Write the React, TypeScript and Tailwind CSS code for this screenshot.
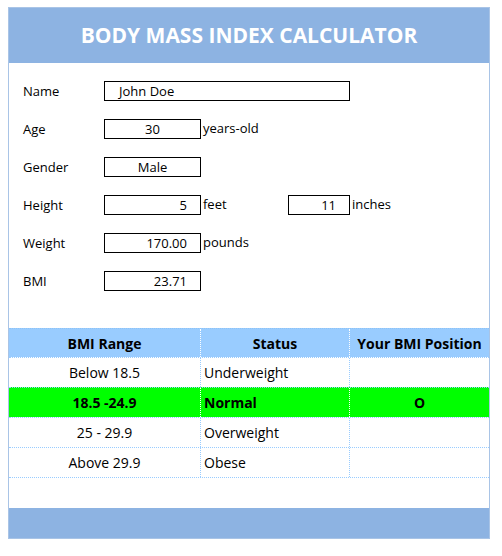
import React from 'react';

const font = { fontFamily: '"Open Sans", "Noto Sans", sans-serif' };

const rows = [
  { range: 'Below 18.5', status: 'Underweight', mark: '' },
  { range: '18.5 -24.9', status: 'Normal', mark: 'O', active: true },
  { range: '25 - 29.9', status: 'Overweight', mark: '' },
  { range: 'Above 29.9', status: 'Obese', mark: '' },
];

const Box: React.FC<{ w: string; align?: 'left' | 'center' | 'right'; children: React.ReactNode }> = ({ w, align = 'right', children }) => (
  <div
    className={`${w} h-[20px] border border-black flex items-center text-[13px] text-black leading-none ${
      align === 'right' ? 'justify-end pr-[13px]' : align === 'center' ? 'justify-center' : 'justify-start pl-[14px]'
    }`}
  >
    {children}
  </div>
);

const Field: React.FC<{ label: string; children: React.ReactNode }> = ({ label, children }) => (
  <div className="flex items-center h-[20px]">
    <div className="w-[81px] text-[13px] text-black pt-[1px]">{label}</div>
    {children}
  </div>
);

export default function App() {
  return (
    <div className="w-[502px] h-[556px] bg-white pt-[7px] pl-[8px]" style={font}>
      <div className="w-[482px] h-[532px] border border-[#a9c4e6] flex flex-col">
        {/* title */}
        <div className="h-[55px] bg-[#8db3e2] flex items-center justify-center shrink-0">
          <h1 className="text-white font-bold text-[21px]">BODY MASS INDEX CALCULATOR</h1>
        </div>

        {/* form */}
        <div className="pl-[14px] pt-[18px] flex flex-col gap-[18px]">
          <Field label="Name">
            <Box w="w-[246px]" align="left">John Doe</Box>
          </Field>
          <Field label="Age">
            <Box w="w-[97px]" align="center">30</Box>
            <span className="ml-[2px] text-[13px]">years-old</span>
          </Field>
          <Field label="Gender">
            <Box w="w-[97px]" align="center">Male</Box>
          </Field>
          <Field label="Height">
            <Box w="w-[97px]">5</Box>
            <span className="ml-[2px] w-[85px] text-[13px]">feet</span>
            <Box w="w-[62px]">11</Box>
            <span className="ml-[2px] text-[13px]">inches</span>
          </Field>
          <Field label="Weight">
            <Box w="w-[97px]">170.00</Box>
            <span className="ml-[2px] text-[13px]">pounds</span>
          </Field>
          <Field label="BMI">
            <Box w="w-[97px]">23.71</Box>
          </Field>
        </div>

        {/* table */}
        <div className="mt-[37px] text-[14px] text-black">
          <div className="grid grid-cols-[192px_149px_139px] h-[29px] bg-[#99ccff] border-t border-dotted border-[#8fc3f5] font-bold">
            <div className="flex items-center justify-center border-r border-dotted border-white">BMI Range</div>
            <div className="flex items-center justify-center border-r border-dotted border-white">Status</div>
            <div className="flex items-center justify-center">Your BMI Position</div>
          </div>
          {rows.map((r) => (
            <div
              key={r.range}
              className={`grid grid-cols-[192px_149px_139px] h-[30px] border-t border-dotted border-[#99ccff] ${
                r.active ? 'bg-[#00ff00] font-bold' : 'bg-white'
              }`}
            >
              <div className={`flex items-center justify-center border-r border-dotted ${r.active ? 'border-white' : 'border-[#99ccff]'}`}>{r.range}</div>
              <div className={`flex items-center pl-[3px] border-r border-dotted ${r.active ? 'border-white' : 'border-[#99ccff]'}`}>{r.status}</div>
              <div className="flex items-center justify-center">{r.mark}</div>
            </div>
          ))}
          <div className="border-t border-dotted border-[#99ccff]" />
        </div>

        <div className="flex-1" />
        <div className="h-[30px] bg-[#8db3e2] shrink-0" />
      </div>
    </div>
  );
}
